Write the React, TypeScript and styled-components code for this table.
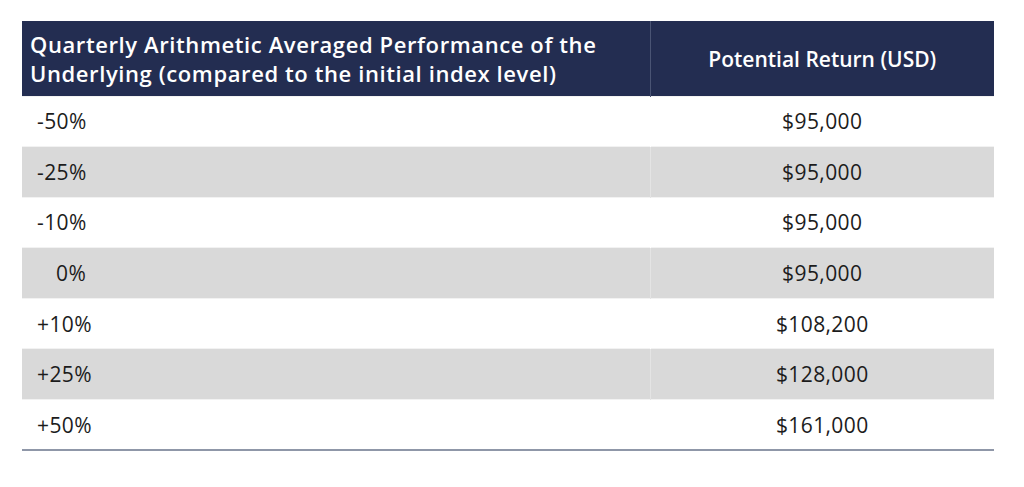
import React from 'react';
import styled, { createGlobalStyle } from 'styled-components';

type Row = {
  change: string;
  value: string;
  indent?: boolean;
};

const rows: Row[] = [
  { change: '-50%', value: '$95,000' },
  { change: '-25%', value: '$95,000' },
  { change: '-10%', value: '$95,000' },
  { change: '0%', value: '$95,000', indent: true },
  { change: '+10%', value: '$108,200' },
  { change: '+25%', value: '$128,000' },
  { change: '+50%', value: '$161,000' },
];

const GlobalStyle = createGlobalStyle`
  html, body {
    margin: 0;
    padding: 0;
    background: #ffffff;
  }
  body {
    font-family: 'Open Sans', Lato, 'Liberation Sans', sans-serif;
    color: #1c1c1c;
  }
`;

const Page = styled.div`
  width: 1024px;
  height: 487px;
  padding: 21px 30px 0 22px;
  box-sizing: border-box;
`;

const Table = styled.table`
  width: 972px;
  border-collapse: collapse;
  border-spacing: 0;
  border-bottom: 2px solid #8f97a8;
`;

const HeadCell = styled.th<{ $wide?: boolean }>`
  height: 75px;
  padding: 2px 8px 0;
  box-sizing: border-box;
  background: #232d51;
  color: #ffffff;
  font-weight: 600;
  font-size: ${(p) => (p.$wide ? '22px' : '21px')};
  letter-spacing: ${(p) => (p.$wide ? '0.6px' : '0')};
  line-height: 29px;
  text-align: ${(p) => (p.$wide ? 'left' : 'center')};
  vertical-align: middle;
  & + & {
    border-left: 1px solid #4a5474;
  }
`;

const BodyRow = styled.tr<{ $shaded: boolean }>`
  background: ${(p) => (p.$shaded ? '#d9d9d9' : '#ffffff')};
  td + td {
    border-left: 1px solid ${(p) => (p.$shaded ? '#e4e4e4' : '#ffffff')};
  }
`;

const Cell = styled.td<{ $align: 'left' | 'center'; $indent?: boolean }>`
  height: 50.6px;
  padding: 0 0 0
    ${(p) => (p.$align === 'center' ? '0' : p.$indent ? '34px' : '15px')};
  box-sizing: border-box;
  font-size: 21px;
  letter-spacing: 0.4px;
  font-weight: 400;
  text-align: ${(p) => p.$align};
  vertical-align: middle;
  border-top: 1px solid #f2f2f2;
`;

const App: React.FC = () => {
  return (
    <Page>
      <GlobalStyle />
      <Table>
        <colgroup>
          <col style={{ width: 628 }} />
          <col style={{ width: 344 }} />
        </colgroup>
        <thead>
          <tr>
            <HeadCell $wide>
              Quarterly Arithmetic Averaged Performance of the
              <br />
              Underlying (compared to the initial index level)
            </HeadCell>
            <HeadCell>Potential Return (USD)</HeadCell>
          </tr>
        </thead>
        <tbody>
          {rows.map((row, i) => (
            <BodyRow key={row.change} $shaded={i % 2 === 1}>
              <Cell $align="left" $indent={row.indent}>
                {row.change}
              </Cell>
              <Cell $align="center">{row.value}</Cell>
            </BodyRow>
          ))}
        </tbody>
      </Table>
    </Page>
  );
};

export default App;
